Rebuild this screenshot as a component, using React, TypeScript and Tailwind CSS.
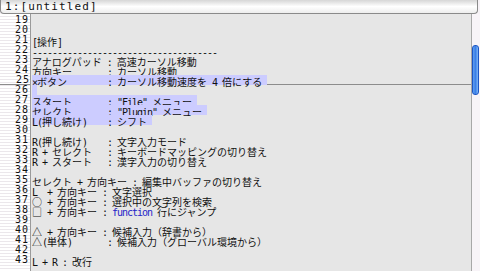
import React from "react";

type Line = { no: number; text: string; sel?: boolean };

const LINES: Line[] = [
  { no: 19, text: "" },
  { no: 20, text: "" },
  { no: 21, text: "[操作]" },
  { no: 22, text: "-------------------------------------" },
  { no: 23, text: "アナログパッド : 高速カーソル移動" },
  { no: 24, text: "方向キー       : カーソル移動" },
  { no: 25, text: "×ボタン        : カーソル移動速度を 4 倍にする", sel: true },
  { no: 26, text: "", sel: true },
  { no: 27, text: 'スタート       : "File" メニュー', sel: true },
  { no: 28, text: 'セレクト       : "Plugin" メニュー', sel: true },
  { no: 29, text: "L(押し続け)    : シフト", sel: true },
  { no: 30, text: "" },
  { no: 31, text: "R(押し続け)    : 文字入力モード" },
  { no: 32, text: "R + セレクト   : キーボードマッピングの切り替え" },
  { no: 33, text: "R + スタート   : 漢字入力の切り替え" },
  { no: 34, text: "" },
  { no: 35, text: "セレクト + 方向キー : 編集中バッファの切り替え" },
  { no: 36, text: "L  + 方向キー : 文字選択" },
  { no: 37, text: "○ + 方向キー : 選択中の文字列を検索" },
  { no: 38, text: "□ + 方向キー : function 行にジャンプ" },
  { no: 39, text: "" },
  { no: 40, text: "△ + 方向キー : 候補入力（辞書から）" },
  { no: 41, text: "△(単体)       : 候補入力（グローバル環境から）" },
  { no: 42, text: "" },
  { no: 43, text: "L + R : 改行" },
];

const CURSOR_LINE = 25;

function isWide(ch: string) {
  const c = ch.codePointAt(0) ?? 0;
  return c > 0x2000;
}

// split a line into half-width / full-width runs so each gets its own cell width
function runs(text: string) {
  const out: { wide: boolean; s: string }[] = [];
  for (const ch of text) {
    const wide = isWide(ch);
    const last = out[out.length - 1];
    if (last && last.wide === wide) last.s += ch;
    else out.push({ wide, s: ch });
  }
  return out;
}

function Segment({ s, wide }: { s: string; wide: boolean }) {
  if (wide) {
    return <span className="font-['Noto_Sans_CJK_JP',sans-serif] text-[10px]">{s}</span>;
  }
  // colour the keyword the way the editor does
  const parts = s.split(/(function)/);
  return (
    <span className="font-['DejaVu_Sans_Mono',monospace] text-[10px] tracking-[-1.02px]">
      {parts.map((p, i) =>
        p === "function" ? (
          <span key={i} className="text-[#2424c8]">
            {p}
          </span>
        ) : (
          <React.Fragment key={i}>{p}</React.Fragment>
        ),
      )}
    </span>
  );
}

function TextLine({ line }: { line: Line }) {
  return (
    <div
      className={`h-[10px] leading-[10px] whitespace-pre ${
        line.no === CURSOR_LINE ? "border-b border-[#8c8c8c]" : ""
      }`}
    >
      <span className={`inline-block h-[10px] ${line.sel ? "bg-[#ccccff]" : ""}`}>
        {runs(line.text).map((r, i) => (
          <Segment key={i} s={r.s} wide={r.wide} />
        ))}
        {line.sel && <span className="inline-block w-[5px]" />}
      </span>
    </div>
  );
}

export default function App() {
  return (
    <div className="flex h-[271px] w-[480px] flex-col overflow-hidden bg-[#f6f2f6] text-[#101010]">
      <div className="mr-[2px] h-[14px] shrink-0 rounded-b-[4px] border border-t-0 border-[#8a8a8a] bg-gradient-to-b from-[#d6d6d6] via-[#ffffff] to-[#ededed] pl-[4px] font-['DejaVu_Sans_Mono',monospace] text-[11px] leading-[13px] tracking-[1.1px]">
        1:[untitled]
      </div>
      <div className="flex min-h-0 flex-1">
        <div className="w-[31px] shrink-0 border-r border-[#9a9a9a] bg-[repeating-linear-gradient(to_bottom,#ffffff_0px,#ffffff_2px,#ebe7eb_2px,#ebe7eb_3px)] pt-[1px] pr-[1px] text-right">
          {LINES.map((l) => (
            <div
              key={l.no}
              className={`h-[10px] font-['DejaVu_Sans_Mono',monospace] text-[10px] leading-[10px] tracking-[1px] ${
                l.no === CURSOR_LINE ? "mr-[-1px] border-b border-[#8c8c8c]" : ""
              }`}
            >
              {l.no}
            </div>
          ))}
        </div>
        <div className="w-[440px] shrink-0 bg-[#e6e6e6] pt-[1px] pl-[1px]">
          {LINES.map((l) => (
            <TextLine key={l.no} line={l} />
          ))}
        </div>
        <div className="relative flex-1 border-l border-[#a8a8a8] bg-[#f8f4f8]">
          <div className="absolute left-[0px] top-[31px] h-[50px] w-[7px] rounded-[3px] border border-[#1d55c4] bg-gradient-to-r from-[#5f9ef0] via-[#3c7fe6] to-[#7fb6f6]" />
        </div>
      </div>
    </div>
  );
}
